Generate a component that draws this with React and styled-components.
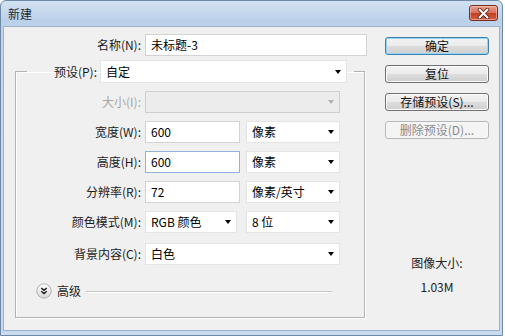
import React from 'react';
import styled, { createGlobalStyle } from 'styled-components';

const GlobalStyle = createGlobalStyle`
  html, body {
    margin: 0;
    padding: 0;
    background: #ffffff;
  }
  body {
    font-family: "Noto Sans CJK SC", "Microsoft YaHei", "Liberation Sans", sans-serif;
    font-size: 12px;
    color: #1b1b1b;
  }
`;

const Window = styled.div`
  width: 503px;
  height: 336px;
  box-sizing: border-box;
  display: flex;
  flex-direction: column;
  background: linear-gradient(180deg, #d3e2f2 0px, #bad1e9 20px, #c4d8ec 60px, #c9dbee 100%);
  border: 1px solid #6f8aa6;
  border-radius: 6px 6px 0 0;
`;

const TitleBar = styled.div`
  height: 25px;
  flex: none;
  display: flex;
  justify-content: space-between;
  align-items: flex-start;
  padding: 0 4px 0 7px;
`;

const Title = styled.span`
  line-height: 25px;
  color: #1e2a36;
`;

const CloseButton = styled.div`
  margin-top: 4px;
  width: 29px;
  height: 16px;
  box-sizing: border-box;
  border: 1px solid #7a2b1d;
  border-radius: 3px;
  background: linear-gradient(180deg, #e9a08e 0%, #d8705a 48%, #c23e22 52%, #d06246 100%);
  box-shadow: inset 0 0 0 1px rgba(255, 215, 205, 0.5);
  display: flex;
  align-items: center;
  justify-content: center;
`;

const Client = styled.div`
  flex: 1;
  margin: 0 2px 4px 2px;
  background: #f0f0f0;
  border: 1px solid #9db2c8;
  display: flex;
`;

const LeftPane = styled.div`
  width: 364px;
  flex: none;
  padding-top: 7px;
`;

const Row = styled.div`
  display: flex;
  align-items: center;
  gap: 4px;
  height: 22px;
  margin-top: ${(p) => p.$mt || 0}px;
`;

const Label = styled.span`
  width: ${(p) => p.$w}px;
  flex: none;
  text-align: right;
  line-height: 16px;
  color: ${(p) => (p.$disabled ? '#a6a6a6' : '#1b1b1b')};
  white-space: nowrap;
`;

const TextBox = styled.div`
  width: ${(p) => p.$w}px;
  height: ${(p) => p.$h || 22}px;
  box-sizing: border-box;
  background: #ffffff;
  border: 1px solid ${(p) => (p.$focus ? '#8fb3d9' : '#d3d3d3')};
  padding-left: 5px;
  line-height: ${(p) => (p.$h || 22) - 2}px;
  color: #000;
`;

const Select = styled.div`
  position: relative;
  width: ${(p) => p.$w}px;
  height: ${(p) => p.$h || 22}px;
  box-sizing: border-box;
  background: ${(p) => (p.$disabled ? '#ececec' : '#ffffff')};
  border: 1px solid ${(p) => (p.$disabled ? '#cfcfcf' : '#e4e4e4')};
  padding-left: 5px;
  line-height: ${(p) => (p.$h || 22) - 2}px;
  color: #000;

  &::after {
    content: '';
    position: absolute;
    right: 5px;
    top: 50%;
    margin-top: -2px;
    border-left: 3px solid transparent;
    border-right: 3px solid transparent;
    border-top: 4px solid ${(p) => (p.$disabled ? '#b0b0b0' : '#000')};
  }
`;

const FieldGroup = styled.div`
  display: flex;
  gap: ${(p) => p.$gap}px;
`;

const GroupBox = styled.fieldset`
  margin: 4px 0 0 11px;
  padding: 0 0 18px 0;
  width: 350px;
  min-width: 0;
  box-sizing: border-box;
  border: 1px solid #b3b3b3;
  box-shadow: inset 1px 1px 0 #ffffff, 1px 1px 0 #ffffff;
`;

const Legend = styled.legend`
  margin-left: 11px;
  padding: 0 7px 0 0;
  display: flex;
  align-items: center;
  gap: 3px;
`;

const Rows = styled.div`
  display: flex;
  flex-direction: column;
  gap: 8px;
  padding-top: 8px;
`;

const AdvancedRow = styled.div`
  display: flex;
  align-items: center;
  height: 16px;
  margin: 18px 32px 0 20px;
`;

const AdvancedText = styled.span`
  margin-left: 5px;
  line-height: 16px;
`;

const Rule = styled.div`
  flex: 1;
  height: 1px;
  margin-left: 5px;
  background: #c6c6c6;
  box-shadow: 0 1px 0 #ffffff;
`;

const RightPane = styled.div`
  flex: 1;
  padding: 10px 0 0 17px;
  display: flex;
  flex-direction: column;
`;

const ButtonStack = styled.div`
  display: flex;
  flex-direction: column;
  gap: 10px;
  width: 104px;
`;

const Button = styled.div`
  height: 18px;
  box-sizing: border-box;
  border: 1px solid ${(p) => (p.$primary ? '#3c7fb1' : p.$disabled ? '#b5b8ba' : '#707070')};
  border-radius: 3px;
  background: ${(p) =>
    p.$disabled
      ? '#f4f4f4'
      : 'linear-gradient(180deg, #f3f3f3 0%, #ebebeb 48%, #dddddd 52%, #cfcfcf 100%)'};
  box-shadow: inset 0 0 0 1px ${(p) => (p.$primary ? '#94d6f6' : p.$disabled ? '#f8f8f8' : '#fbfbfb')};
  color: ${(p) => (p.$disabled ? '#8c8c8c' : '#111')};
  text-align: center;
  line-height: 16px;
`;

const ImageSize = styled.div`
  width: 104px;
  margin-top: 116px;
  display: flex;
  flex-direction: column;
  align-items: center;
  gap: 8px;
  line-height: 16px;
  color: #222;
`;

const CloseIcon = () => (
  <svg width="13" height="11" viewBox="0 0 13 11">
    <path d="M2.5 1.5 L10.5 9.5 M10.5 1.5 L2.5 9.5" stroke="#5a1d12" strokeWidth="3.6" strokeLinecap="round" />
    <path d="M2.5 1.5 L10.5 9.5 M10.5 1.5 L2.5 9.5" stroke="#ffffff" strokeWidth="2" strokeLinecap="round" />
  </svg>
);

const ExpandIcon = () => (
  <svg width="16" height="16" viewBox="0 0 16 16">
    <defs>
      <linearGradient id="exp" x1="0" y1="0" x2="0" y2="1">
        <stop offset="0" stopColor="#ffffff" />
        <stop offset="1" stopColor="#d6d6d6" />
      </linearGradient>
    </defs>
    <circle cx="8" cy="8" r="7.2" fill="url(#exp)" stroke="#a9a9a9" strokeWidth="0.9" />
    <path d="M5.3 5 L8 7.3 L10.7 5 M5.3 8.3 L8 10.6 L10.7 8.3" fill="none" stroke="#1a1a1a" strokeWidth="1.4" />
  </svg>
);

const App = () => {
  return (
    <>
      <GlobalStyle />
      <Window>
        <TitleBar>
          <Title>新建</Title>
          <CloseButton>
            <CloseIcon />
          </CloseButton>
        </TitleBar>
        <Client>
          <LeftPane>
            <Row>
              <Label $w={137}>名称(N):</Label>
              <TextBox $w={222}>未标题-3</TextBox>
            </Row>
            <GroupBox>
              <Legend>
                <Label $w={70}>预设(P):</Label>
                <Select $w={247} $h={23}>自定</Select>
              </Legend>
              <Rows>
                <Row>
                  <Label $w={125} $disabled>大小(I):</Label>
                  <Select $w={195} $disabled />
                </Row>
                <Row>
                  <Label $w={125}>宽度(W):</Label>
                  <FieldGroup $gap={6}>
                    <TextBox $w={95}>600</TextBox>
                    <Select $w={94}>像素</Select>
                  </FieldGroup>
                </Row>
                <Row>
                  <Label $w={125}>高度(H):</Label>
                  <FieldGroup $gap={6}>
                    <TextBox $w={95} $focus>600</TextBox>
                    <Select $w={94}>像素</Select>
                  </FieldGroup>
                </Row>
                <Row>
                  <Label $w={125}>分辨率(R):</Label>
                  <FieldGroup $gap={6}>
                    <TextBox $w={95}>72</TextBox>
                    <Select $w={94}>像素/英寸</Select>
                  </FieldGroup>
                </Row>
                <Row>
                  <Label $w={125}>颜色模式(M):</Label>
                  <FieldGroup $gap={9}>
                    <Select $w={92}>RGB 颜色</Select>
                    <Select $w={94}>8 位</Select>
                  </FieldGroup>
                </Row>
                <Row $mt={2}>
                  <Label $w={125}>背景内容(C):</Label>
                  <Select $w={195}>白色</Select>
                </Row>
              </Rows>
              <AdvancedRow>
                <ExpandIcon />
                <AdvancedText>高级</AdvancedText>
                <Rule />
              </AdvancedRow>
            </GroupBox>
          </LeftPane>
          <RightPane>
            <ButtonStack>
              <Button $primary>确定</Button>
              <Button>复位</Button>
              <Button>存储预设(S)...</Button>
              <Button $disabled>删除预设(D)...</Button>
            </ButtonStack>
            <ImageSize>
              <span>图像大小:</span>
              <span>1.03M</span>
            </ImageSize>
          </RightPane>
        </Client>
      </Window>
    </>
  );
};

export default App;
